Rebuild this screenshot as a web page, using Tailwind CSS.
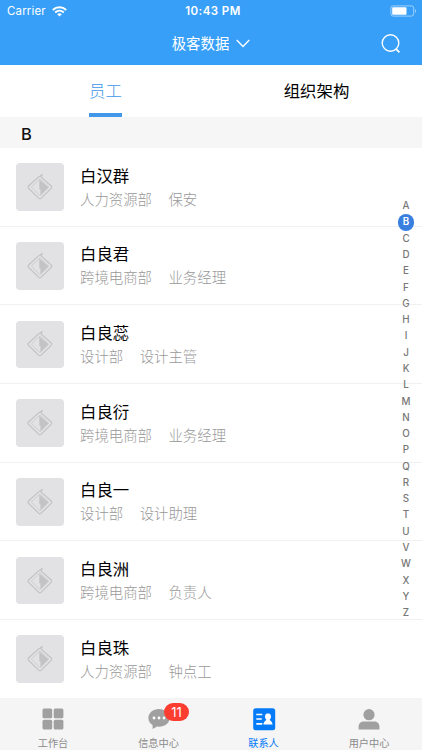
<!DOCTYPE html>
<html lang="zh-CN">
<head>
<meta charset="utf-8">
<meta name="viewport" content="width=device-width, initial-scale=1">
<title>联系人</title>
<script src="https://cdn.jsdelivr.net/npm/@tailwindcss/browser@4"></script>
</head>
<body class="bg-white">
<div class="relative flex h-[750px] w-[422px] flex-col overflow-hidden bg-white font-[Inter,'Noto_Sans_CJK_SC',sans-serif] text-black">
  <header class="h-[65.3px] shrink-0 bg-[#389ff8] text-white">
    <div class="grid h-[22px] grid-cols-3 items-center pr-[5px] pl-[7px] text-[11px] leading-none">
      <div class="flex items-center gap-[6px]">
        <span class="pt-[2px] text-[11.5px] tracking-[0.15px]">Carrier</span>
        <svg class="h-[11px] w-[15px]" viewBox="0 0 15 11" fill="none" stroke="currentColor" stroke-width="1.9"><path d="M.8 4C4.600.4 10.400.4 14.200 4M3.200 6.500C5.700 4.200 9.300 4.200 11.800 6.500"/><path d="M7.500 10.600 5.200 8.200C6.500 7 8.500 7 9.800 8.200Z" fill="currentColor" stroke="none"/></svg>
      </div>
      <span class="pt-[2px] pl-[2px] text-center text-[11.5px] font-semibold tracking-[0.45px] whitespace-nowrap">10:43 PM</span>
      <svg class="h-[12px] w-[27px] justify-self-end" viewBox="0 0 27 12" fill="none"><rect x=".9" y=".9" width="22.800" height="10.200" rx="2.300" stroke="#fff" stroke-opacity=".5"/><rect x="2.200" y="2.300" width="14.300" height="7.400" rx=".8" fill="#fff"/><path d="M25 4.300c1.600.6 1.600 2.800 0 3.400Z" fill="#fff" fill-opacity=".5"/></svg>
    </div>
    <div class="grid h-[43px] grid-cols-[1fr_auto_1fr] items-center">
      <span></span>
      <div class="flex items-center gap-[7px]">
        <span class="text-[14.4px] leading-5">极客数据</span>
        <svg class="h-[9px] w-[14px]" viewBox="0 0 14 9" fill="none" stroke="currentColor" stroke-width="1.300"><path d="m.7 1 6.300 6.500L13.300 1"/></svg>
      </div>
      <svg class="mr-[21px] h-[20px] w-[20px] justify-self-end" viewBox="0 0 20 20" fill="none" stroke="currentColor" stroke-width="1.400"><circle cx="9.500" cy="9" r="8.300"/><path d="m14.900 14.900 3.500 3.500" stroke-width="1.800"/></svg>
    </div>
  </header>

  <nav class="grid h-[51.7px] shrink-0 grid-cols-2 text-[16.4px] leading-[53px]">
    <div class="flex justify-center"><span class="h-[51.7px] border-b-4 border-[#4197e8] font-light text-[#4197e8]">员工</span></div>
    <div class="text-center">组织架构</div>
  </nav>
  <div class="flex h-[31px] shrink-0 items-center bg-[#f6f6f6] pt-[3px] pl-[21px] text-[16.5px] font-medium text-[#111]">B</div>

  <main id="list" class="min-h-0 flex-1 overflow-hidden"></main>

  <footer class="grid h-[52px] shrink-0 grid-cols-[106px_105px_105px_106px] border-t border-[#f3f3f3] bg-[#f5f5f5] text-[10.200px] leading-3 text-[#8b8b8b]">
    <div class="flex flex-col items-center pt-[8px]">
      <svg class="h-6 w-6" viewBox="0 0 24 24" fill="#a0a0a0"><rect x="1.500" y="1.500" width="9.700" height="9.700" rx="1.500"/><rect x="12.700" y="1.500" width="9.700" height="9.700" rx="1.500"/><rect x="1.500" y="12.700" width="9.700" height="9.700" rx="1.500"/><rect x="12.700" y="12.700" width="9.700" height="9.700" rx="1.500"/></svg>
      <span class="mt-[6px]">工作台</span>
    </div>
    <div class="relative flex flex-col items-center pt-[8px]">
      <svg class="h-6 w-6" viewBox="0 0 24 24"><path d="M12 2C6 2 1.400 5.900 1.400 10.900c0 3.200 1.700 5.600 4.200 7.200v4l4.500-2.500c.6.100 1.200.1 1.900.1 6 0 10.600-3.900 10.600-8.800S18 2 12 2Z" fill="#a0a0a0"/><g fill="#fff"><circle cx="7" cy="11" r="1.400"/><circle cx="12" cy="11" r="1.400"/><circle cx="17" cy="11" r="1.400"/></g></svg>
      <span class="mt-[6px]">信息中心</span>
      <span class="absolute top-[3.500px] left-[58px] flex h-[18.500px] w-[25px] items-center justify-center rounded-full bg-[#fc3d30] text-[13px] text-white">11</span>
    </div>
    <div class="flex flex-col items-center pt-[8px] text-[#067bf8]">
      <svg class="h-6 w-6" viewBox="0 0 24 24"><rect x="1.200" y="1.200" width="22" height="22" rx="2.500" fill="#067bf8"/><path d="M4.300 7.500h6M4.300 12h5.500M4.300 16.800h6" stroke="#fff" stroke-width="1.700"/><path d="M16 6.300c-2 0-3 1.400-3 3.100 0 1.300.5 2.400 1.300 3.100-.2 1.300-2.600 1.700-2.900 5h9.200c-.3-3.300-2.700-3.700-2.900-5 .8-.7 1.300-1.800 1.300-3.100 0-1.700-1-3.100-3-3.100Z" fill="#fff"/></svg>
      <span class="mt-[6px]">联系人</span>
    </div>
    <div class="flex flex-col items-center pt-[8px]">
      <svg class="h-6 w-6" viewBox="0 0 24 24" fill="#a0a0a0"><circle cx="12" cy="7.700" r="5.600"/><path d="M1.600 22.400v-2.600c0-3.300 2.300-5.200 5.300-5.200h10.200c3 0 5.300 1.900 5.300 5.200v2.600Z"/></svg>
      <span class="mt-[6px]">用户中心</span>
    </div>
  </footer>

  <aside id="letters" class="absolute top-[197.900px] right-[6px] flex w-5 flex-col items-center text-[9.800px] font-medium text-[#777]"></aside>
</div>
<script>
  const people = [
    ['白汉群', '人力资源部', '保安'],
    ['白良君', '跨境电商部', '业务经理'],
    ['白良蕊', '设计部', '设计主管'],
    ['白良衍', '跨境电商部', '业务经理'],
    ['白良一', '设计部', '设计助理'],
    ['白良洲', '跨境电商部', '负责人'],
    ['白良珠', '人力资源部', '钟点工'],
  ];
  document.getElementById('list').innerHTML = people.map(([name, dept, role]) => `
    <div class="flex h-[78.700px] items-center border-b border-[#f1f1f1] pt-[0.500px] pl-4">
      <div class="flex h-[47.500px] w-[48px] shrink-0 items-center justify-center rounded-[4px] bg-[#e2e2e4]">
        <svg class="h-[28px] w-[28px]" viewBox="0 0 28 28" fill="none"><path d="M14.300 3.300q-.9-.3-1.700.5L2.600 13q-1.200 1.200 0 2.400l10 9.800q1.300 1.200 2.600 0l10-9.800q1.200-1.200 0-2.400L15 3.900l1.300-2.500-2.800 2" stroke="#c1c1c3" stroke-width="1.100" stroke-linejoin="round"/><path d="m14 5.800-8.700 8.400 8.700 8.500 8.700-8.500Z" stroke="#cbcbcd" stroke-width=".9"/><path d="M13.300 6.500v9.700h1.100v6l8-8Z" fill="#c3c3c5"/></svg>
      </div>
      <div class="ml-4">
        <div class="text-[16.400px] leading-[24px]">${name}</div>
        <div class="flex gap-[16.500px] text-[14.400px] leading-[23px] font-light text-[#999]"><span>${dept}</span><span>${role}</span></div>
      </div>
    </div>`).join('');
  document.getElementById('letters').innerHTML = [...'ABCDEFGHIJKLMNOPQRSTUVWXYZ'].map(c =>
    `<div class="flex h-[16.290px] items-center justify-center"><span class="${c === 'B' ? 'flex h-[16.500px] w-[16.500px] shrink-0 items-center justify-center rounded-full bg-[#387fdf] font-semibold text-white' : 'leading-none'}">${c}</span></div>`).join('');
</script>
</body>
</html>
